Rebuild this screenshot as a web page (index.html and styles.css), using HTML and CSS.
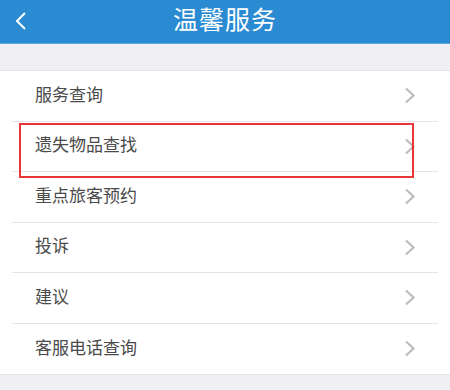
FILE: index.html
```html
<!DOCTYPE html>
<html lang="zh">
<head>
<meta charset="utf-8">
<link rel="stylesheet" href="styles.css">
</head>
<body>
<header class="bar">
  <span class="back"><svg width="14" height="20" viewBox="0 0 14 20"><path d="M11 2 L3 10 L11 18" fill="none" stroke="#fff" stroke-width="2"/></svg></span>
  <h1 class="title">温馨服务</h1>
</header>
<div class="gap"></div>
<ul class="list">
  <li class="row"><span class="label">服务查询</span><svg class="chev" width="12" height="17" viewBox="0 0 12 17"><path d="M2 1.5 L9.5 8.5 L2 15.5" fill="none" stroke="#bcbcbc" stroke-width="2.2"/></svg></li>
  <li class="row marked"><span class="label">遗失物品查找</span><svg class="chev" width="12" height="17" viewBox="0 0 12 17"><path d="M2 1.5 L9.5 8.5 L2 15.5" fill="none" stroke="#bcbcbc" stroke-width="2.2"/></svg></li>
  <li class="row"><span class="label">重点旅客预约</span><svg class="chev" width="12" height="17" viewBox="0 0 12 17"><path d="M2 1.5 L9.5 8.5 L2 15.5" fill="none" stroke="#bcbcbc" stroke-width="2.2"/></svg></li>
  <li class="row"><span class="label">投诉</span><svg class="chev" width="12" height="17" viewBox="0 0 12 17"><path d="M2 1.5 L9.5 8.5 L2 15.5" fill="none" stroke="#bcbcbc" stroke-width="2.2"/></svg></li>
  <li class="row"><span class="label">建议</span><svg class="chev" width="12" height="17" viewBox="0 0 12 17"><path d="M2 1.5 L9.5 8.5 L2 15.5" fill="none" stroke="#bcbcbc" stroke-width="2.2"/></svg></li>
  <li class="row"><span class="label">客服电话查询</span><svg class="chev" width="12" height="17" viewBox="0 0 12 17"><path d="M2 1.5 L9.5 8.5 L2 15.5" fill="none" stroke="#bcbcbc" stroke-width="2.2"/></svg></li>
</ul>
</body>
</html>
```
FILE: styles.css
```css
* { box-sizing: border-box; margin: 0; padding: 0; }
body {
  background: #efeff4;
  font-family: "Noto Sans CJK SC", "Noto Sans", sans-serif;
  width: 450px;
  height: 390px;
  overflow: hidden;
}
.bar {
  height: 44px;
  background: #2a8bd3;
  border-bottom: 1px solid #5aa8e3;
  display: flex;
  align-items: center;
  justify-content: center;
  position: relative;
}
.back {
  position: absolute;
  left: 14px;
  top: 11px;
  display: flex;
}
.title {
  color: #fff;
  font-size: 25px;
  font-weight: 400;
  letter-spacing: 1px;
  line-height: 1;
  margin-top: -6px;
}
.gap { height: 26px; }
.list {
  list-style: none;
  background: #fff;
  border-top: 1px solid #e3e3e6;
  border-bottom: 1px solid #e3e3e6;
  padding-left: 12px;
}
.row {
  height: 50.5px;
  display: flex;
  align-items: center;
  justify-content: space-between;
  padding-left: 23px;
  padding-right: 22px;
  border-bottom: 1px solid #e4e4e6;
  margin-right: 12px;
  font-size: 17px;
  color: #4a4a4a;
  position: relative;
}
.row:last-child { border-bottom: none; }
.label {
  line-height: 1;
  margin-top: -5px;
}
.chev { display: block; }
.marked::after {
  content: "";
  position: absolute;
  left: 7px;
  right: 24px;
  top: 1px;
  bottom: -7px;
  border: 2px solid #e8373a;
  pointer-events: none;
}
```
